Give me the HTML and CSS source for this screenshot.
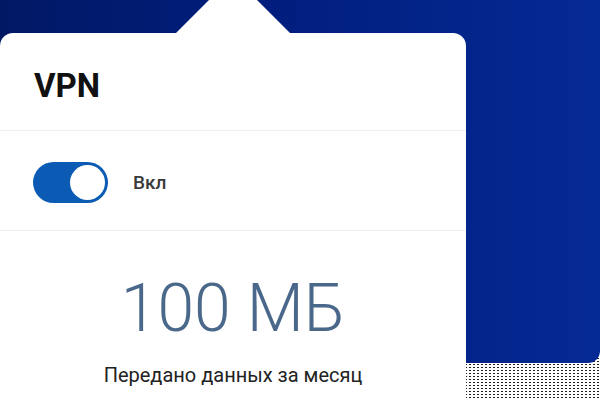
FILE: index.html
```html
<!DOCTYPE html>
<html lang="ru">
<head>
<meta charset="utf-8">
<title>VPN</title>
<link rel="stylesheet" href="styles.css">
</head>
<body>
<div class="stage">
  <div class="backdrop"></div>
  <section class="card">
    <header class="card-head">
      <h1 class="title">VPN</h1>
    </header>
    <div class="toggle-row">
      <span class="switch" role="switch" aria-checked="true"><span class="knob"></span></span>
      <span class="switch-label">Вкл</span>
    </div>
    <div class="stats">
      <div class="amount">100 МБ</div>
      <div class="caption">Передано данных за месяц</div>
    </div>
  </section>
</div>
</body>
</html>
```

FILE: styles.css
```css
html, body {
  margin: 0;
  padding: 0;
}
body {
  width: 600px;
  height: 400px;
  overflow: hidden;
  font-family: Roboto, "Noto Sans", "Liberation Sans", sans-serif;
}
.stage {
  display: grid;
  width: 600px;
  height: 400px;
  background-color: #ffffff;
  background-image: radial-gradient(circle, #1e1e1e 0.7px, transparent 1.1px);
  background-size: 4px 3px;
  overflow: hidden;
}
.backdrop {
  grid-area: 1 / 1;
  height: 363px;
  border-bottom-right-radius: 12px;
  background: linear-gradient(90deg, #011864 0%, #011e7e 45%, #04289400 100%), #052994;
}
.card {
  grid-area: 1 / 1;
  position: relative;
  align-self: start;
  margin-top: 33px;
  width: 466px;
  height: 400px;
  background: #ffffff;
  border-radius: 13px 13px 0 0;
}
.card::before {
  content: "";
  position: absolute;
  left: 175px;
  top: -57px;
  width: 116px;
  height: 58px;
  background: #ffffff;
  clip-path: polygon(50% 0, 100% 100%, 0 100%);
}
.card-head {
  height: 98px;
  padding: 36px 0 0 34px;
  box-sizing: border-box;
  border-bottom: 1px solid #efefef;
}
.title {
  margin: 0;
  font-size: 33px;
  line-height: 33px;
  font-weight: 700;
  color: #111111;
}
.toggle-row {
  height: 100px;
  display: flex;
  align-items: center;
  gap: 25px;
  padding: 3px 0 0 33px;
  box-sizing: border-box;
  border-bottom: 1px solid #efefef;
}
.switch {
  display: flex;
  justify-content: flex-end;
  align-items: center;
  width: 75px;
  height: 41px;
  padding: 0 3px;
  box-sizing: border-box;
  border-radius: 21px;
  background: #0b5bb5;
}
.knob {
  width: 35px;
  height: 35px;
  border-radius: 50%;
  background: #ffffff;
}
.switch-label {
  font-size: 19px;
  font-weight: 500;
  color: #3a3a3a;
}
.stats {
  display: flex;
  flex-direction: column;
  align-items: center;
  padding-top: 45px;
}
.amount {
  font-size: 66px;
  line-height: 66px;
  font-weight: 300;
  color: #4a6889;
}
.caption {
  margin-top: 23px;
  font-size: 20px;
  line-height: 20px;
  color: #222222;
}
```
